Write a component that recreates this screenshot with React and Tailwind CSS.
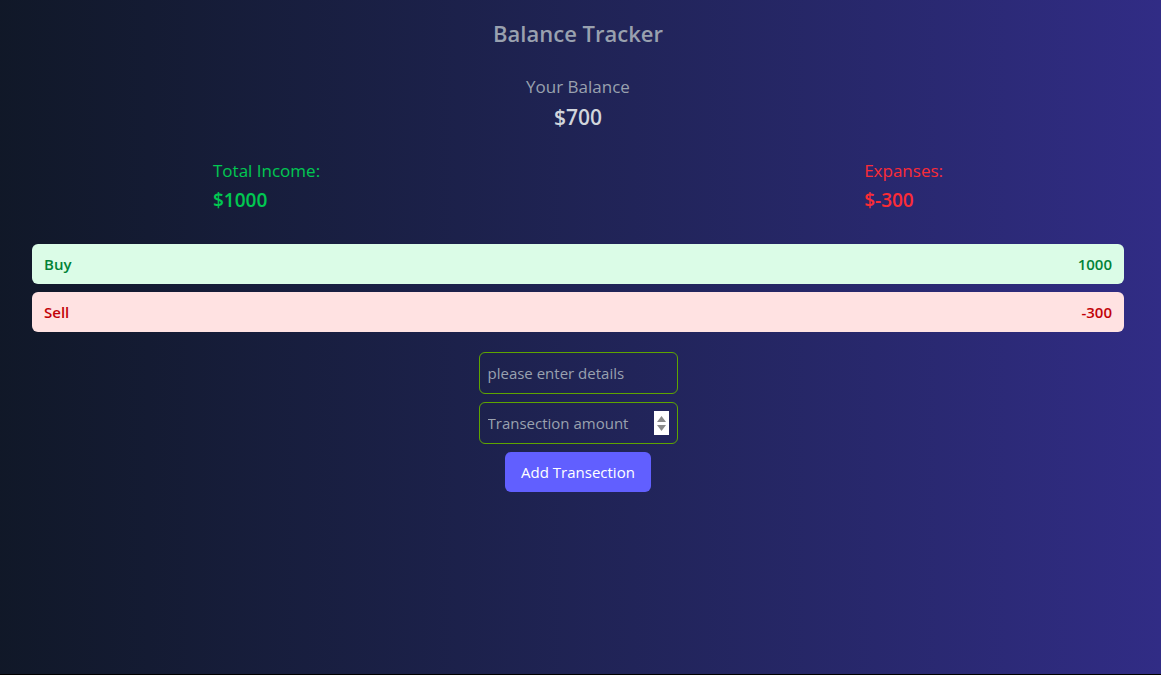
import React, { useState } from "react";

function Spinner() {
  return (
    <span className="flex flex-col items-center justify-center gap-[3px] w-[15px] h-[24px] bg-white">
      <svg width="9" height="6" viewBox="0 0 9 6"><path d="M4.5 0 L9 6 L0 6 Z" fill="#8a8a8a" /></svg>
      <svg width="9" height="6" viewBox="0 0 9 6"><path d="M0 0 L9 0 L4.5 6 Z" fill="#8a8a8a" /></svg>
    </span>
  );
}

export default function App() {
  const [details, setDetails] = useState("");
  const [amount, setAmount] = useState("");
  const rows = [
    { id: 1, text: "Buy", amount: 1000 },
    { id: 2, text: "Sell", amount: -300 },
  ];

  return (
    <div
      className="h-[675px] bg-gradient-to-r from-gray-900 to-indigo-900 pl-8 pr-[37px] pt-[18px] border-b border-black"
      style={{ fontFamily: '"Segoe UI", "Open Sans", sans-serif' }}
    >
      <h1 className="text-center text-[22px] font-semibold text-gray-400 leading-[30px]">Balance Tracker</h1>

      <div className="mt-[27px] text-center">
        <div className="text-[17px] text-gray-400 leading-[24px]">Your Balance</div>
        <div className="text-[21px] font-semibold text-gray-300 leading-[30px] mt-[3px]">$700</div>
      </div>

      <div className="flex justify-between pl-[181px] pr-[181px] mt-[27px]">
        <div>
          <div className="text-[17px] text-green-500 leading-[24px]">Total Income:</div>
          <div className="text-[19px] font-semibold text-green-500 leading-[28px] mt-[3px]">$1000</div>
        </div>
        <div>
          <div className="text-[17px] text-red-500 leading-[24px]">Expanses:</div>
          <div className="text-[19px] font-semibold text-red-500 leading-[28px] mt-[3px]">$-300</div>
        </div>
      </div>

      <div className="mt-[30px] flex flex-col gap-2">
        {rows.map((r) => (
          <div
            key={r.id}
            className={`flex items-center justify-between h-10 px-3 rounded-md text-[15px] font-semibold ${
              r.amount > 0 ? "bg-green-100 text-green-700" : "bg-red-100 text-red-700"
            }`}
          >
            <span>{r.text}</span>
            <span>{r.amount}</span>
          </div>
        ))}
      </div>

      <div className="mt-5 flex flex-col items-center gap-2">
        <input
          className="w-[199px] h-[42px] px-2 rounded-md border border-lime-600 bg-transparent text-gray-300 placeholder-gray-400 text-[15px] outline-none"
          placeholder="please enter details"
          value={details}
          onChange={(e) => setDetails(e.target.value)}
        />
        <div className="w-[199px] h-[42px] pl-2 pr-2 rounded-md border border-lime-600 flex items-center">
          <input
            className="flex-1 min-w-0 bg-transparent text-gray-300 placeholder-gray-400 text-[15px] outline-none"
            placeholder="Transection amount"
            value={amount}
            onChange={(e) => setAmount(e.target.value)}
          />
          <Spinner />
        </div>
        <button className="w-[146px] h-10 rounded-md bg-indigo-500 text-white text-[15px]">
          Add Transection
        </button>
      </div>
    </div>
  );
}
